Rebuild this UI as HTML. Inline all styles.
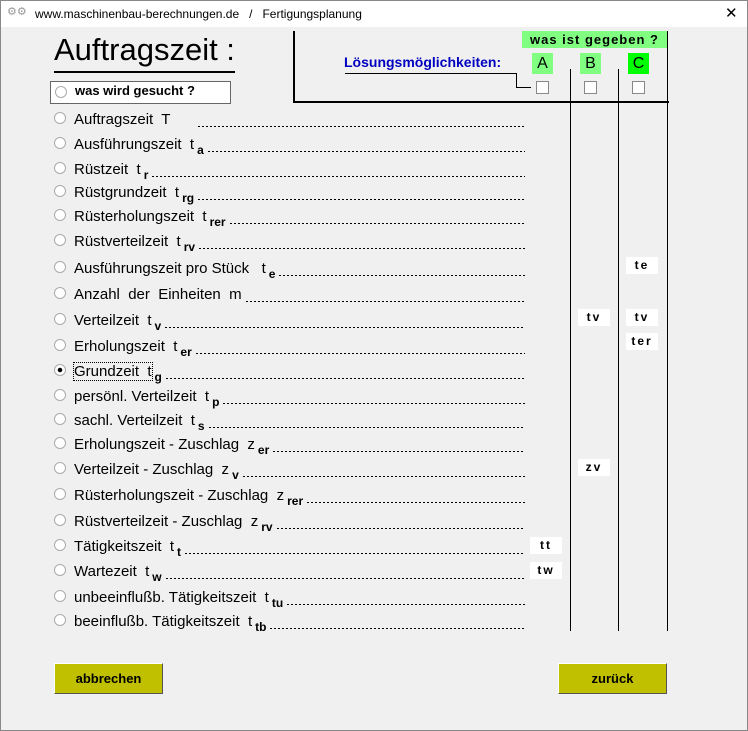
<!DOCTYPE html>
<html><head><meta charset="utf-8"><style>
*{margin:0;padding:0;box-sizing:border-box}
body{width:748px;height:731px;background:#f0f0f0;font-family:"Liberation Sans",Arial,sans-serif;position:relative;overflow:hidden;border:1px solid #888}
.tb{position:absolute;left:0;top:0;width:746px;height:26px;background:#fff;font-size:12px;color:#000}
.a{position:absolute}
.row{position:absolute;left:53px;width:471px;height:20px;display:flex;align-items:flex-end;font-size:15px;white-space:nowrap}
.rad{width:12px;height:12px;border-radius:50%;border:1px solid #aaa;background:#fff;margin-right:8px;margin-bottom:4px;flex:none;position:relative}
.sub{font-size:12px;font-weight:bold;position:relative;top:4px;margin-left:3px}
.dot{flex:1;height:1px;margin-left:4px;margin-bottom:1px;background:repeating-linear-gradient(90deg,#000 0 2px,transparent 2px 4px)}
.vl{position:absolute;width:2px;background:#000}
.tag{position:absolute;width:32px;height:17px;background:#fff;font-size:12px;font-weight:bold;text-align:center;line-height:17px;letter-spacing:2px}
.cb{position:absolute;width:13px;height:13px;border:1px solid #888;background:#fff;top:80px}
.btn{position:absolute;top:662px;width:109px;height:31px;background:#c0c000;border:1px solid;border-color:#fff #555 #555 #fff;font-size:13px;font-weight:bold;text-align:center;line-height:29px}
</style></head><body>
<div class="tb"><span class="a" style="left:6px;top:4px;color:#999;font-size:11px">⚙⚙</span><span class="a" style="left:34px;top:6px">www.maschinenbau-berechnungen.de &nbsp; / &nbsp; Fertigungsplanung</span><span class="a" style="left:724px;top:3px;font-size:15px;font-weight:300">✕</span></div>
<div class="a" style="left:53px;top:31px;font-size:31px">Auftragszeit :</div>
<div class="a" style="left:53px;top:70px;width:181px;height:2px;background:#000"></div>
<div class="a" style="left:49px;top:80px;width:181px;height:23px;background:#fff;border:1px solid #666"></div>
<div class="rad a" style="left:54px;top:85px"></div>
<div class="a" style="left:74px;top:82px;font-size:13px;font-weight:bold">was wird gesucht ?</div>
<div class="vl" style="left:292px;top:30px;height:72px"></div>
<div class="a" style="left:292px;top:100px;width:376px;height:2px;background:#000"></div>
<div class="vl" style="left:666px;top:30px;height:600px;width:1px"></div>
<div class="vl" style="left:569px;top:68px;height:562px;width:1px"></div>
<div class="vl" style="left:617px;top:68px;height:562px;width:1px"></div>
<div class="a" style="left:521px;top:30px;width:145px;height:17px;background:#80ff80;font-size:13px;font-weight:bold;text-align:center;line-height:17px;letter-spacing:1px">was ist gegeben ?</div>
<div class="a" style="left:531px;top:52px;width:21px;height:21px;background:#80ff80;font-size:16px;text-align:center;line-height:21px">A</div>
<div class="a" style="left:579px;top:52px;width:21px;height:21px;background:#80ff80;font-size:16px;text-align:center;line-height:21px">B</div>
<div class="a" style="left:627px;top:52px;width:21px;height:21px;background:#00ff00;font-size:16px;text-align:center;line-height:21px">C</div>
<div class="a" style="left:343px;top:53px;font-size:14px;font-weight:bold;color:#0000c0">Lösungsmöglichkeiten:</div>
<div class="a" style="left:344px;top:72px;width:172px;height:1px;background:#000"></div>
<div class="a" style="left:515px;top:72px;width:1px;height:15px;background:#000"></div>
<div class="a" style="left:515px;top:86px;width:15px;height:1px;background:#000"></div>
<div class="cb" style="left:535px"></div><div class="cb" style="left:583px"></div><div class="cb" style="left:631px"></div>

<div class="row" style="top:107px"><span class="rad"></span>Auftragszeit&nbsp; T<span class="dot" style="margin-left:28px"></span></div>
<div class="row" style="top:132px"><span class="rad"></span>Ausführungszeit&nbsp; t<span class="sub">a</span><span class="dot"></span></div>
<div class="row" style="top:157px"><span class="rad"></span>Rüstzeit&nbsp; t<span class="sub">r</span><span class="dot"></span></div>
<div class="row" style="top:180px"><span class="rad"></span>Rüstgrundzeit&nbsp; t<span class="sub">rg</span><span class="dot"></span></div>
<div class="row" style="top:204px"><span class="rad"></span>Rüsterholungszeit&nbsp; t<span class="sub">rer</span><span class="dot"></span></div>
<div class="row" style="top:229px"><span class="rad"></span>Rüstverteilzeit&nbsp; t<span class="sub">rv</span><span class="dot"></span></div>
<div class="row" style="top:256px"><span class="rad"></span>Ausführungszeit pro Stück&nbsp;&nbsp; t<span class="sub">e</span><span class="dot"></span></div>
<div class="row" style="top:282px"><span class="rad"></span>Anzahl&nbsp; der&nbsp; Einheiten&nbsp; m<span class="dot"></span></div>
<div class="row" style="top:308px"><span class="rad"></span>Verteilzeit&nbsp; t<span class="sub">v</span><span class="dot"></span></div>
<div class="row" style="top:334px"><span class="rad"></span>Erholungszeit&nbsp; t<span class="sub">er</span><span class="dot"></span></div>
<div class="row" style="top:359px"><span class="rad" style="background:radial-gradient(circle,#000 0 2px,#fff 2.5px)"></span><span style="outline:1px dotted #000">Grundzeit&nbsp; t</span><span class="sub">g</span><span class="dot"></span></div>
<div class="row" style="top:384px"><span class="rad"></span>persönl. Verteilzeit&nbsp; t<span class="sub">p</span><span class="dot"></span></div>
<div class="row" style="top:408px"><span class="rad"></span>sachl. Verteilzeit&nbsp; t<span class="sub">s</span><span class="dot"></span></div>
<div class="row" style="top:432px"><span class="rad"></span>Erholungszeit - Zuschlag&nbsp; z<span class="sub">er</span><span class="dot"></span></div>
<div class="row" style="top:457px"><span class="rad"></span>Verteilzeit - Zuschlag&nbsp; z<span class="sub">v</span><span class="dot"></span></div>
<div class="row" style="top:483px"><span class="rad"></span>Rüsterholungszeit - Zuschlag&nbsp; z<span class="sub">rer</span><span class="dot"></span></div>
<div class="row" style="top:509px"><span class="rad"></span>Rüstverteilzeit - Zuschlag&nbsp; z<span class="sub">rv</span><span class="dot"></span></div>
<div class="row" style="top:534px"><span class="rad"></span>Tätigkeitszeit&nbsp; t<span class="sub">t</span><span class="dot"></span></div>
<div class="row" style="top:559px"><span class="rad"></span>Wartezeit&nbsp; t<span class="sub">w</span><span class="dot"></span></div>
<div class="row" style="top:585px"><span class="rad"></span>unbeeinflußb. Tätigkeitszeit&nbsp; t<span class="sub">tu</span><span class="dot"></span></div>
<div class="row" style="top:609px"><span class="rad"></span>beeinflußb. Tätigkeitszeit&nbsp; t<span class="sub">tb</span><span class="dot"></span></div>

<div class="tag" style="left:625px;top:256px">te</div>
<div class="tag" style="left:577px;top:308px">tv</div>
<div class="tag" style="left:625px;top:308px">tv</div>
<div class="tag" style="left:625px;top:332px">ter</div>
<div class="tag" style="left:577px;top:458px">zv</div>
<div class="tag" style="left:529px;top:536px">tt</div>
<div class="tag" style="left:529px;top:561px">tw</div>

<div class="btn" style="left:53px">abbrechen</div>
<div class="btn" style="left:557px">zurück</div>
</body></html>
